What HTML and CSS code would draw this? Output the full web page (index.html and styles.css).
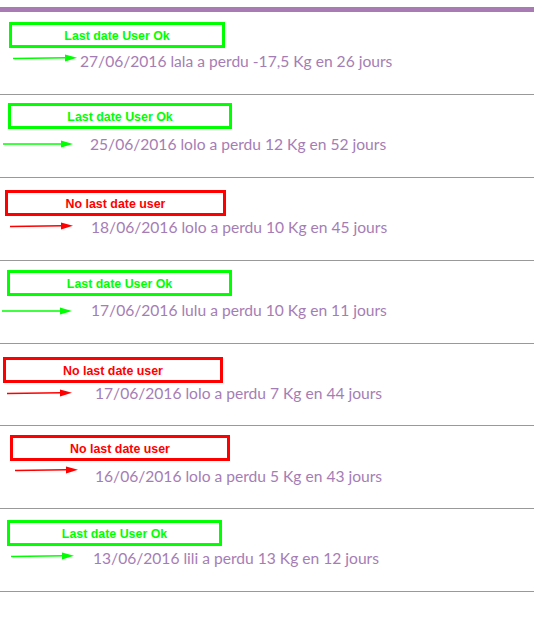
FILE: index.html
```html
<!DOCTYPE html>
<html lang="fr">
<head>
<meta charset="utf-8">
<title>Historique</title>
<link rel="stylesheet" href="styles.css">
</head>
<body>
<div class="topbar"></div>
<ul class="feed">
  <li class="entry r1">
    <div class="note ok">Last date User Ok</div>
    <div class="line">
      <svg class="arrow ok" width="64" height="12" viewBox="0 0 64 12"><path d="M0 6.5 L53 5.8" /><polygon points="52,2.5 64,5.8 52,9.5" /></svg>
      <span class="msg">27/06/2016 lala a perdu -17,5 Kg en 26 jours</span>
    </div>
  </li>
  <li class="entry r2">
    <div class="note ok">Last date User Ok</div>
    <div class="line">
      <svg class="arrow ok" width="70" height="12" viewBox="0 0 70 12"><path d="M0 6 L59 6" /><polygon points="58,2.5 70,6 58,9.5" /></svg>
      <span class="msg">25/06/2016 lolo a perdu 12 Kg en 52 jours</span>
    </div>
  </li>
  <li class="entry r3">
    <div class="note ko">No last date user</div>
    <div class="line">
      <svg class="arrow ko" width="63" height="12" viewBox="0 0 63 12"><path d="M0 6.5 L52 5.8" /><polygon points="51,2.5 63,5.8 51,9.5" /></svg>
      <span class="msg">18/06/2016 lolo a perdu 10 Kg en 45 jours</span>
    </div>
  </li>
  <li class="entry r4">
    <div class="note ok">Last date User Ok</div>
    <div class="line">
      <svg class="arrow ok" width="70" height="12" viewBox="0 0 70 12"><path d="M0 6 L59 6" /><polygon points="58,2.5 70,6 58,9.5" /></svg>
      <span class="msg">17/06/2016 lulu a perdu 10 Kg en 11 jours</span>
    </div>
  </li>
  <li class="entry r5">
    <div class="note ko">No last date user</div>
    <div class="line">
      <svg class="arrow ko" width="65" height="12" viewBox="0 0 65 12"><path d="M0 6.5 L54 5.8" /><polygon points="53,2.5 65,5.8 53,9.5" /></svg>
      <span class="msg">17/06/2016 lolo a perdu 7 Kg en 44 jours</span>
    </div>
  </li>
  <li class="entry r6">
    <div class="note ko">No last date user</div>
    <div class="line">
      <svg class="arrow ko" width="63" height="12" viewBox="0 0 63 12"><path d="M0 6.5 L52 5.8" /><polygon points="51,2.5 63,5.8 51,9.5" /></svg>
      <span class="msg">16/06/2016 lolo a perdu 5 Kg en 43 jours</span>
    </div>
  </li>
  <li class="entry r7">
    <div class="note ok">Last date User Ok</div>
    <div class="line">
      <svg class="arrow ok" width="63" height="12" viewBox="0 0 63 12"><path d="M0 6.5 L52 5.8" /><polygon points="51,2.5 63,5.8 51,9.5" /></svg>
      <span class="msg">13/06/2016 lili a perdu 13 Kg en 12 jours</span>
    </div>
  </li>
</ul>
</body>
</html>
```
FILE: styles.css
```css
html, body {
  margin: 0;
  padding: 0;
  background: #ffffff;
}

.topbar {
  margin-top: 7px;
  height: 5px;
  background: #a97bb5;
}

.feed {
  list-style: none;
  margin: 0;
  padding: 0;
}

.entry {
  box-sizing: border-box;
  height: 83px;
  border-bottom: 1px solid #999999;
  display: flex;
  flex-direction: column;
  align-items: flex-start;
}

.note {
  box-sizing: border-box;
  height: 26px;
  border: 3px solid;
  padding-top: 1px;
  line-height: 20px;
  text-align: center;
  font-family: "Liberation Sans", Arial, sans-serif;
  font-weight: bold;
  font-size: 12.4px;
}

.note.ok {
  color: #00ff00;
  border-color: #00ff00;
}

.note.ko {
  color: #ff0000;
  border-color: #ff0000;
}

.line {
  display: flex;
  align-items: flex-start;
  height: 18px;
}

.arrow {
  flex: none;
  display: block;
}

.arrow path {
  fill: none;
  stroke-width: 1.5;
}

.arrow.ok path { stroke: #00ff00; }
.arrow.ok polygon { fill: #00ff00; }
.arrow.ko path { stroke: #ff0000; }
.arrow.ko polygon { fill: #ff0000; }

.msg {
  font-family: Lato, "Open Sans", sans-serif;
  font-size: 15.6px;
  line-height: 18px;
  color: #a57db5;
  white-space: nowrap;
}

/* row-by-row placement of the hand-drawn annotations */
.r1 .note { margin: 10px 0 0 9px; width: 216px; }
.r1 .line { margin-top: 4px; }
.r1 .arrow { margin: 0 3px 0 13px; }

.r2 .note { margin: 8px 0 0 8px; width: 224px; }
.r2 .line { margin-top: 6px; }
.r2 .arrow { margin: 3px 17px 0 3px; }

.r3 .note { margin: 12px 0 0 5px; width: 221px; }
.r3 .line { margin-top: 2px; }
.r3 .arrow { margin: 2px 18px 0 10px; }

.r4 .note { margin: 9px 0 0 7px; width: 225px; }
.r4 .line { margin-top: 5px; }
.r4 .arrow { margin: 4px 19px 0 2px; }

.entry.r5 { height: 82px; }
.r5 .note { margin: 13px 0 0 3px; width: 220px; }
.r5 .line { margin-top: 1px; }
.r5 .arrow { margin: 3px 23px 0 7px; }

.r6 .note { margin: 9px 0 0 10px; width: 220px; }
.r6 .line { margin-top: 6px; }
.r6 .arrow { margin: -3px 17px 0 15px; }

.r7 .note { margin: 11px 0 0 7px; width: 215px; }
.r7 .line { margin-top: 3px; }
.r7 .arrow { margin: 1px 19px 0 11px; }
```
